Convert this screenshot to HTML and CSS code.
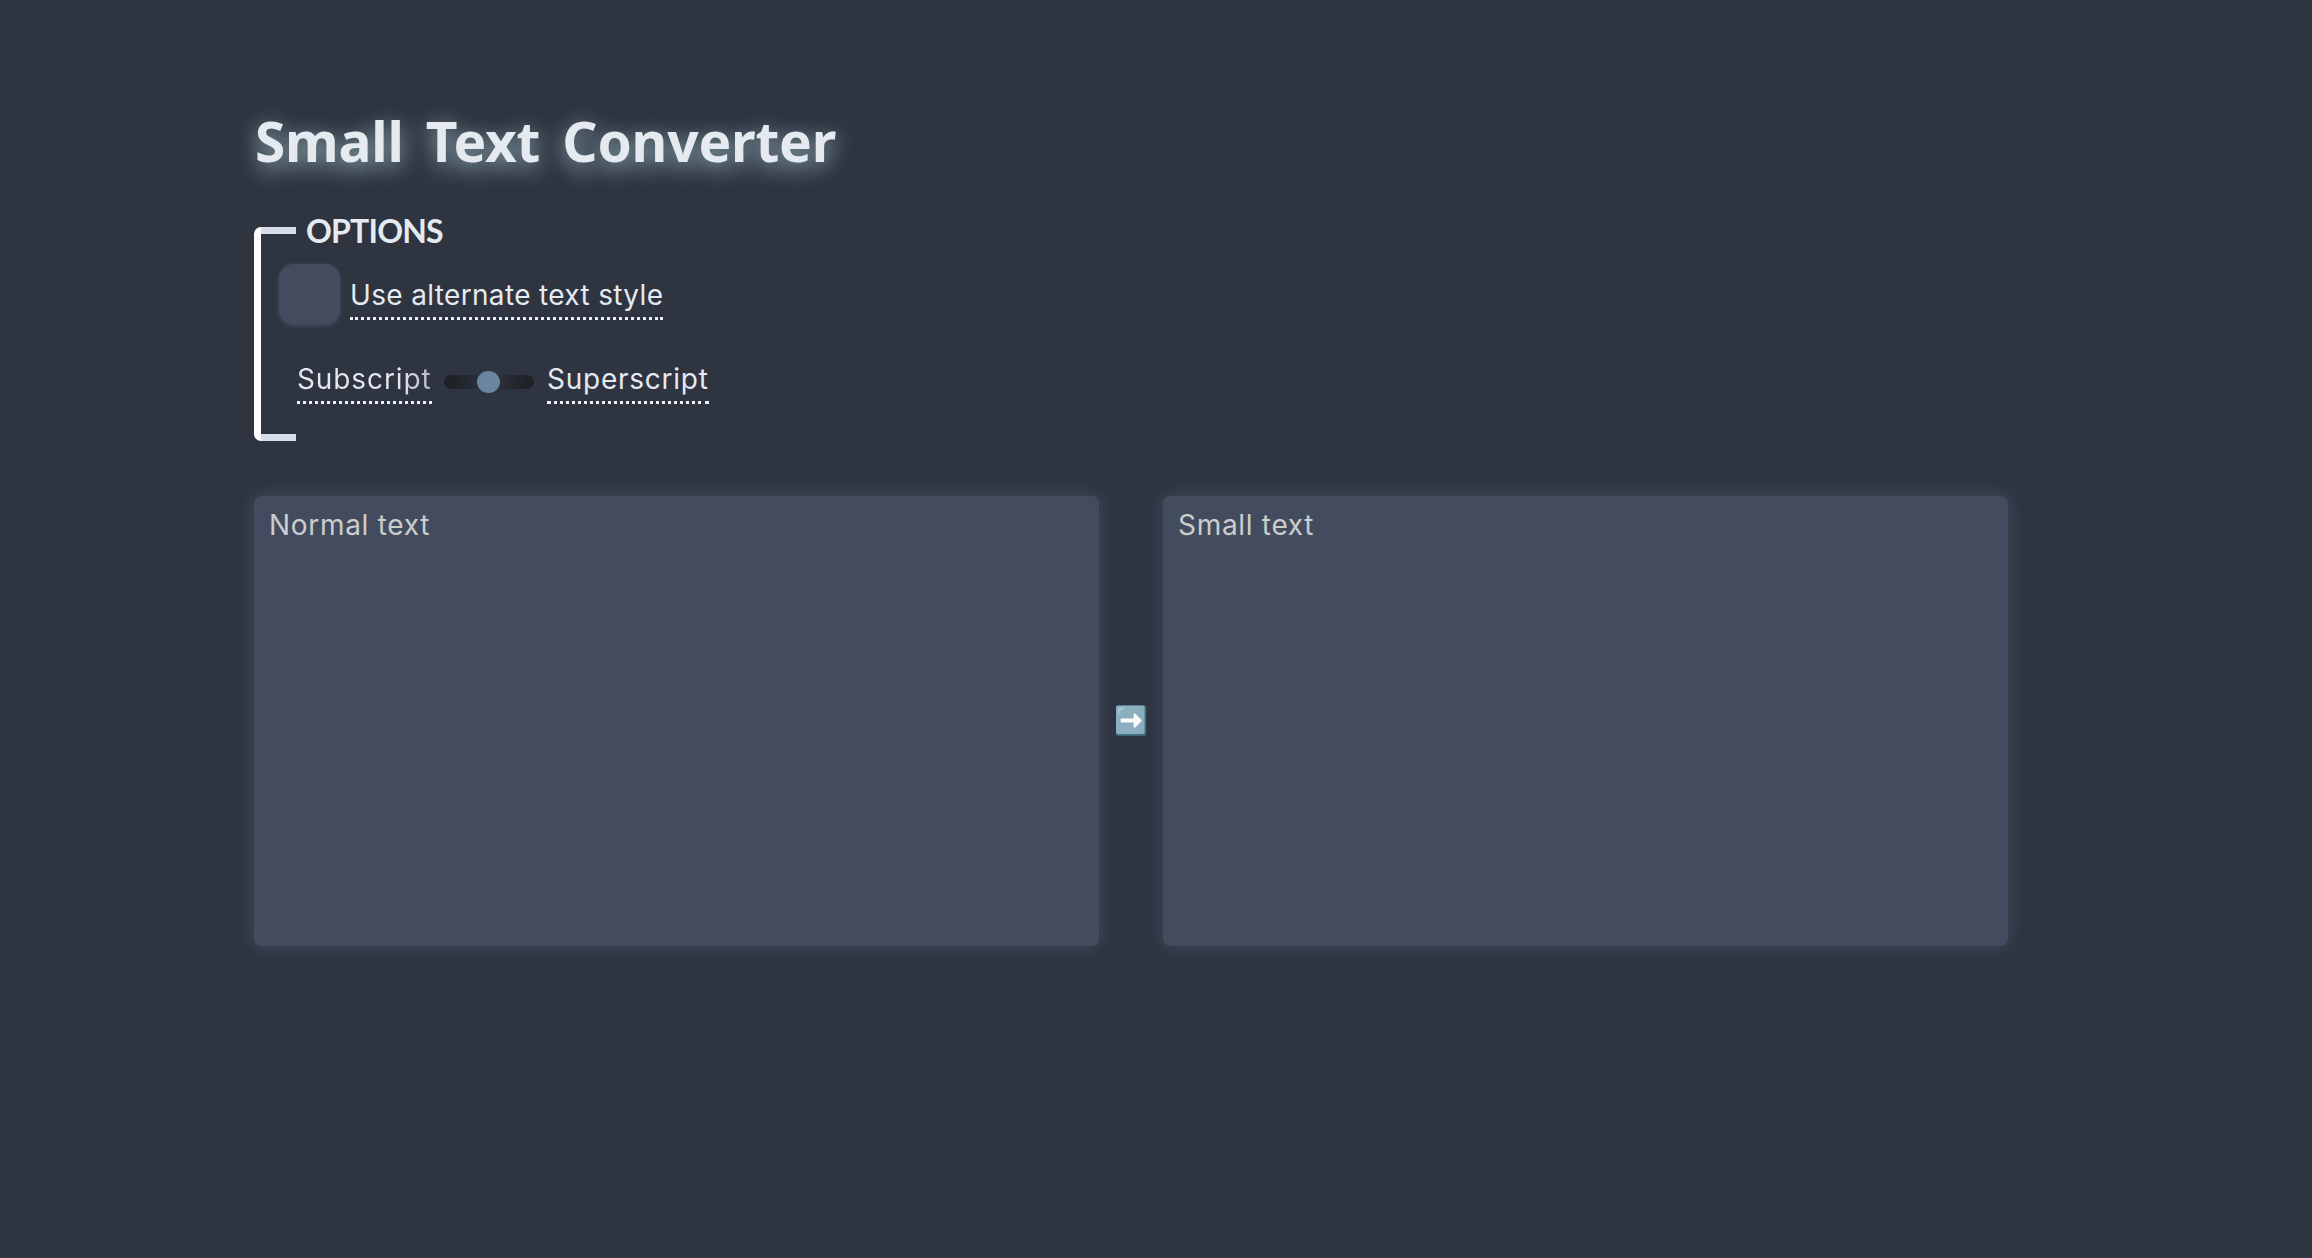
FILE: index.html
```html
<!DOCTYPE html>
<html lang="en">
<head>
<meta charset="utf-8">
<title>Small Text Converter</title>
<link rel="stylesheet" href="styles.css">
</head>
<body>
<main class="page">
  <h1 class="title">Small Text Converter</h1>
  <section class="options">
    <h2 class="legend">OPTIONS</h2>
    <div class="row row-check">
      <span class="checkbox" role="checkbox" aria-checked="false"></span>
      <span class="label label-alt">Use alternate text style</span>
    </div>
    <div class="row row-range">
      <span class="label label-sub"><span class="fade">Subscript</span></span>
      <span class="slider"><span class="thumb"></span></span>
      <span class="label label-super">Superscript</span>
    </div>
  </section>
  <section class="converter">
    <div class="panel">Normal text</div>
    <div class="arrow">➡️</div>
    <div class="panel">Small text</div>
  </section>
</main>
</body>
</html>
```
FILE: styles.css
```css
* { box-sizing: border-box; }

body {
  margin: 0;
  min-height: 1258px;
  background: #2e3440;
  color: #e5e9f0;
  font: 400 28px/34px Inter, "Noto Color Emoji", sans-serif;
}

.page {
  width: 1754px;
  margin-left: 254px;
  padding-top: 103px;
}

.title {
  margin: 0 0 0 1px;
  font: 700 55px/76px "Noto Sans", sans-serif;
  letter-spacing: -0.2px;
  word-spacing: 8px;
  text-shadow: 0 6px 22px #9dbac3;
}

.options {
  width: 500px;
  height: 214px;
  margin-top: 48px;
  border-left: 7px solid #fff;
  border-radius: 7px 0 0 7px;
  background:
    linear-gradient(#d8dee9, #d8dee9) 0 0 / 35px 7px no-repeat,
    linear-gradient(#d8dee9, #d8dee9) 0 100% / 35px 7px no-repeat;
  display: flex;
  flex-direction: column;
}

.legend {
  margin: -11px 0 0 45px;
  font: 700 32px/30px Lato, sans-serif;
  letter-spacing: -0.8px;
}

.row {
  display: flex;
  align-items: flex-start;
}

.row-check {
  margin-top: 18px;
  padding-left: 18px;
  gap: 10px;
}

.row-range {
  margin-top: 37px;
  padding-left: 36px;
}

.checkbox {
  width: 61px;
  height: 61px;
  border-radius: 15px;
  background: #434c5e;
  box-shadow: 0 1px 5px #434c5e;
}

.label {
  height: 42px;
  border-bottom: 3px dotted #eceff4;
  white-space: nowrap;
}

.label-alt {
  width: 313px;
  margin-top: 14px;
  letter-spacing: 0.34px;
}

.label-sub {
  width: 135px;
  letter-spacing: 0.9px;
}

.label-super {
  width: 162px;
  letter-spacing: 0.75px;
}

.fade {
  background: linear-gradient(90deg, #e5e9f0 75%, #b4b8c4);
  background-clip: text;
  color: transparent;
}

.slider {
  width: 90px;
  height: 14px;
  margin: 13px 13px 0 12px;
  padding-left: 33px;
  border-radius: 7px;
  background: linear-gradient(90deg, #1f2126 8%, #2c313c 45%, #2c313c 58%, #1f2126 92%);
  display: flex;
  align-items: center;
}

.thumb {
  flex: none;
  width: 23px;
  height: 22px;
  border-radius: 50%;
  background: #6a859e;
}

.converter {
  display: flex;
  align-items: center;
  margin-top: 55px;
}

.panel {
  width: 845px;
  height: 450px;
  padding: 12px 15px;
  border-radius: 7px;
  background: #434c5e;
  box-shadow: 0 0 20px #434c5e;
  color: #ccc;
  letter-spacing: 0.7px;
}

.arrow {
  width: 64px;
  padding: 0 0 2px 1px;
  font-size: 27.5px;
  text-align: center;
}
```
